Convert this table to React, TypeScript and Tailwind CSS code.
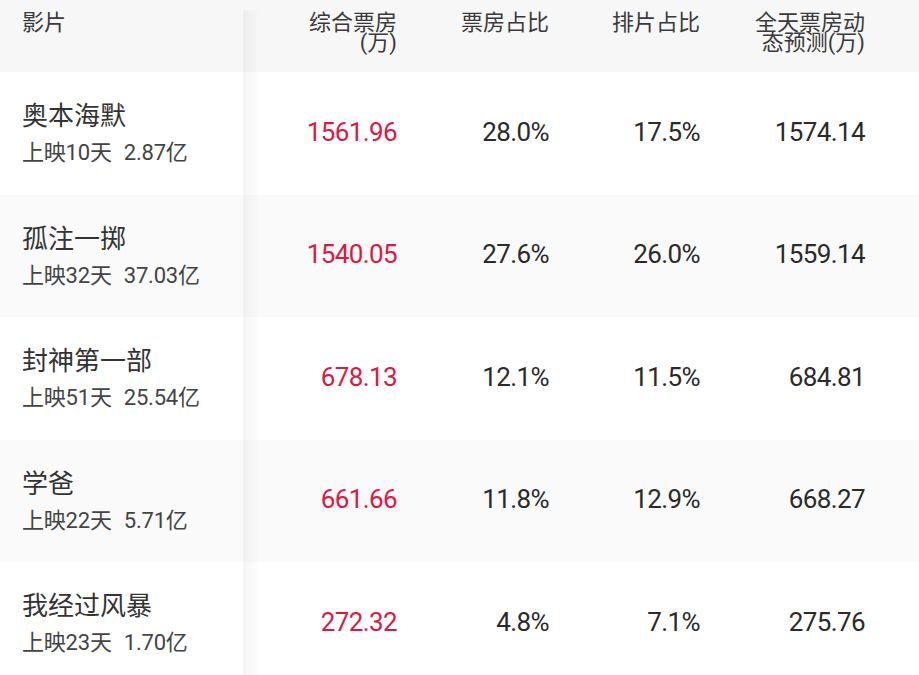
import React from "react";

interface Movie {
  name: string;
  days: number;
  total: string;
  boxOffice: string;
  boxShare: string;
  showShare: string;
  forecast: string;
}

const movies: Movie[] = [
  { name: "奥本海默", days: 10, total: "2.87", boxOffice: "1561.96", boxShare: "28.0%", showShare: "17.5%", forecast: "1574.14" },
  { name: "孤注一掷", days: 32, total: "37.03", boxOffice: "1540.05", boxShare: "27.6%", showShare: "26.0%", forecast: "1559.14" },
  { name: "封神第一部", days: 51, total: "25.54", boxOffice: "678.13", boxShare: "12.1%", showShare: "11.5%", forecast: "684.81" },
  { name: "学爸", days: 22, total: "5.71", boxOffice: "661.66", boxShare: "11.8%", showShare: "12.9%", forecast: "668.27" },
  { name: "我经过风暴", days: 23, total: "1.70", boxOffice: "272.32", boxShare: "4.8%", showShare: "7.1%", forecast: "275.76" },
];

const cols = "grid grid-cols-[243px_154px_152px_151px_165px_1fr]";

export default function App() {
  return (
    <div className="relative h-[675px] w-[919px] overflow-hidden bg-white font-['Roboto','Noto_Sans_CJK_SC',sans-serif] text-[#333]">
      {/* Header */}
      <div className={`${cols} h-[72px] bg-[#f7f7f7] pt-[13px] text-[22px] leading-[20px] text-[#3a3a3a]`}>
        <div className="pl-[22px]">影片</div>
        <div className="text-right">
          综合票房
          <br />
          (万)
        </div>
        <div className="text-right">票房占比</div>
        <div className="text-right">排片占比</div>
        <div className="text-right">
          全天票房动
          <br />
          态预测(万)
        </div>
        <div />
      </div>

      {/* Rows */}
      {movies.map((m, i) => (
        <div
          key={m.name}
          className={`${cols} h-[122.5px] items-center ${i % 2 === 1 ? "bg-[#fafafa]" : "bg-white"}`}
        >
          <div className="flex flex-col pl-[22px]">
            <span className="text-[26px] leading-[34px] text-[#333]">{m.name}</span>
            <span className="mt-[6px] text-[22px] leading-[28px] tracking-[-0.2px] text-[#444]">
              上映{m.days}天<span className="ml-[12px]">{m.total}亿</span>
            </span>
          </div>
          <div className="-mt-[2px] text-right text-[26px] tracking-[-0.6px] text-[#e0173f]">{m.boxOffice}</div>
          <div className="-mt-[2px] text-right text-[26px] tracking-[-0.6px] text-[#2a2a2a]">{m.boxShare}</div>
          <div className="-mt-[2px] text-right text-[26px] tracking-[-0.6px] text-[#2a2a2a]">{m.showShare}</div>
          <div className="-mt-[2px] text-right text-[26px] tracking-[-0.6px] text-[#2a2a2a]">{m.forecast}</div>
          <div />
        </div>
      ))}

      {/* Sticky column shadow */}
      <div className="pointer-events-none absolute bottom-0 left-[243px] top-[10px] w-[18px] bg-gradient-to-r from-black/[0.04] to-transparent" />
    </div>
  );
}
